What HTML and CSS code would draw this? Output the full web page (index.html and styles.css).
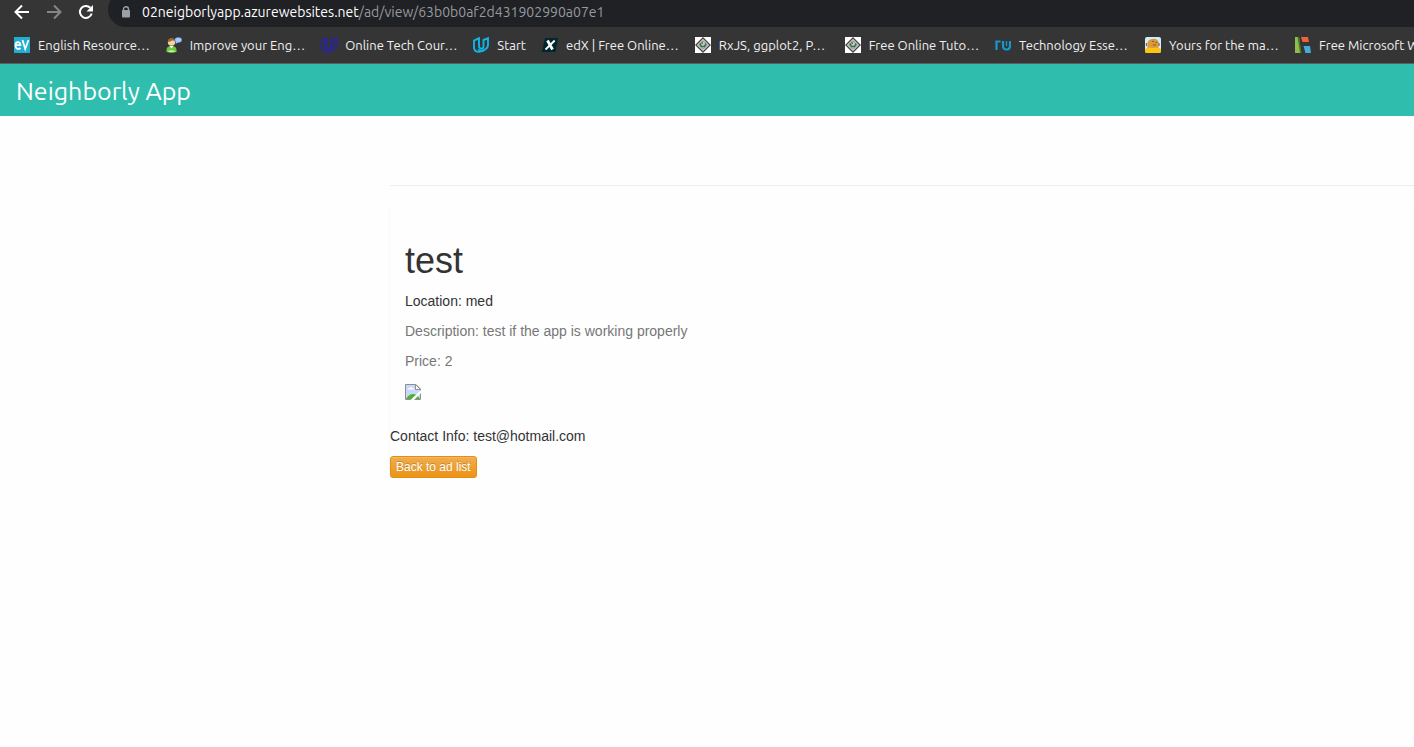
FILE: index.html
```html
<!DOCTYPE html>
<html lang="en">
<head>
<meta charset="utf-8">
<title>Neighborly App</title>
<link rel="stylesheet" href="styles.css">
</head>
<body>
<header class="browser">
  <div class="toolbar">
    <button class="nav-button" type="button" aria-label="Back"><svg width="16" height="16" viewBox="0 0 16 16"><path d="M15 8H2M8 1.5L1.5 8L8 14.5" fill="none" stroke="#fff" stroke-width="2"/></svg></button>
    <button class="nav-button" type="button" aria-label="Forward" disabled><svg width="16" height="16" viewBox="0 0 16 16"><path d="M1 8H14M8 1.5L14.500 8L8 14.500" fill="none" stroke="#868686" stroke-width="2"/></svg></button>
    <button class="nav-button" type="button" aria-label="Reload"><svg width="16" height="16" viewBox="0 0 16 16"><path d="M13.700 9.500A6 6 0 1 1 12.300 3.800" fill="none" stroke="#fff" stroke-width="2"/><path d="M15 1V7.500H8.500Z" fill="#fff"/></svg></button>
    <div class="address">
      <svg class="lock" width="10" height="12" viewBox="0 0 10 12"><path d="M2.500 5V3.200a2.500 2.500 0 0 1 5 0V5" fill="none" stroke="#9aa0a6" stroke-width="1.400"/><rect x="1" y="4" width="8" height="7.500" rx="1" fill="#9aa0a6"/></svg>
      <span class="url"><span class="host">02neigborlyapp.azurewebsites.net</span>/ad/view/63b0b0af2d431902990a07e1</span>
    </div>
  </div>
  <nav class="bookmarks" aria-label="Bookmarks">
    <a class="bookmark" href="#"><svg class="favicon" viewBox="0 0 16 16"><rect width="16" height="16" fill="#22aed1"/><path d="M1.500 8.200H6.500C6.500 4 1.500 4 1.500 8.300C1.500 12.500 5 12.500 6.500 11M8.500 3L11.200 12L14.500 3" fill="none" stroke="#fff" stroke-width="1.800"/></svg><span class="label">English Resource…</span></a>
    <a class="bookmark" href="#"><svg class="favicon" viewBox="0 0 16 16"><path d="M.5 15C0 10 2.500 9 5.500 9S11 10 10.500 15Q5.500 16.500 .5 15Z" fill="#69c83f"/><path d="M1.500 14.500Q5.500 12 9.500 14.500Q5.500 16 1.500 14.500Z" fill="#c4f3a0"/><path d="M3.500 9L5.500 11.500L7.500 9Z" fill="#fff"/><circle cx="5.500" cy="5.200" r="3.600" fill="#f7d3a1"/><path d="M1.800 5C1.500 0 9 0 9.100 4.500L6.500 3.200Q4.500 5 1.800 5Z" fill="#9d642b"/><ellipse cx="12.300" cy="3" rx="3.400" ry="2.400" fill="#a9ccff" stroke="#5f98e8" stroke-width=".6"/><path d="M10 4.500L9.500 7L12 5.300Z" fill="#a9ccff"/></svg><span class="label">Improve your Eng…</span></a>
    <a class="bookmark" href="#"><svg class="favicon" viewBox="0 0 16 16"><path d="M5.500 .8L.7 3.500V10.500Q1 15.300 6 15.300Q11 14.500 12.500 13Q15.400 11.500 15.400 8V.8L10.500 3V9.500Q10.300 12 8.500 12Q6 11.500 5.800 9V.8M3.500 2V9.500Q4 13 7.200 14V15M12.800 2V8Q12.500 12 9 12" fill="none" stroke="#2015ff" stroke-width=".8"/></svg><span class="label">Online Tech Cour…</span></a>
    <a class="bookmark" href="#"><svg class="favicon" viewBox="0 0 16 16"><path d="M6 1.200L1 3.700V10.500Q1.200 14.800 6 14.800Q10.500 14 12 12.500Q15 11 15 7.500V1.200L10.500 3V9.500Q10.300 11.800 8.500 11.800Q6 11.500 6 9Z" fill="none" stroke="#10b4e5" stroke-width="1.900"/><path d="M5 12.500L8 14" stroke="#10b4e5" stroke-width="1.500"/></svg><span>Start</span></a>
    <a class="bookmark" href="#"><svg class="favicon" viewBox="0 0 16 16"><path d="M3 1H16L13.500 15H0Z" fill="#00262b"/><path d="M5.500 3.500L10.500 12.500" stroke="#fff" stroke-width="2.800"/><path d="M12.700 3.500L3.500 12.500" stroke="#fff" stroke-width="1.800"/></svg><span class="label">edX | Free Online…</span></a>
    <a class="bookmark" href="#"><svg class="favicon" viewBox="0 0 16 16"><rect width="16" height="16" fill="#fff"/><path d="M8 1L15 8L8 15L1 8Z" fill="#fff" stroke="#444" stroke-width="1.400"/><path d="M8 3.500L12.500 8L8 12.500L3.500 8Z" fill="#b8d0bf" stroke="#777"/><path d="M5 6.500L6.500 9.500H9.500L11 6.500M6.500 6H8" fill="none" stroke="#316f49" stroke-width="1.500"/><circle cx="7" cy="5.500" r=".8" fill="#d55"/></svg><span class="label">RxJS, ggplot2, P…</span></a>
    <a class="bookmark" href="#"><svg class="favicon" viewBox="0 0 16 16"><rect width="16" height="16" fill="#fff"/><path d="M8 1L15 8L8 15L1 8Z" fill="#fff" stroke="#444" stroke-width="1.400"/><path d="M8 3.500L12.500 8L8 12.500L3.500 8Z" fill="#b8d0bf" stroke="#777"/><path d="M5 6.500L6.500 9.500H9.500L11 6.500M6.500 6H8" fill="none" stroke="#316f49" stroke-width="1.500"/><circle cx="7" cy="5.500" r=".8" fill="#d55"/></svg><span class="label">Free Online Tuto…</span></a>
    <a class="bookmark" href="#"><svg class="favicon" viewBox="0 0 16 16"><path d="M1.500 13V4.500H5.500M8 4V8.500Q8 12.500 11.500 12.500Q15 12.500 15 8.500V4" fill="none" stroke="#1498cf" stroke-width="2.200"/><path d="M11.500 4V9" stroke="#1498cf" stroke-width="1.400"/></svg><span class="label">Technology Esse…</span></a>
    <a class="bookmark" href="#"><svg class="favicon" viewBox="0 0 16 16"><rect width="16" height="16" rx="2" fill="#cdeefb"/><path d="M2.500 11V6Q3 2.500 7 2Q12 1 13.500 5V11Z" fill="#d99a3c"/><path d="M1.500 6V9M14 6V9" stroke="#b94b32" stroke-width="1.200"/><path d="M7 4.500H9M10.500 5.500H12.500M8 8H11" stroke="#75451c" stroke-width=".8"/><path d="M0 12Q4 9.500 8 11Q13 9.500 16 12V14Q16 16 14 16H2Q0 16 0 14Z" fill="#fdc414"/></svg><span class="label">Yours for the ma…</span></a>
    <a class="bookmark" href="#"><svg class="favicon" viewBox="0 0 16 16"><path d="M0 0H4L6 16H0Z" fill="#8fbd4c"/><path d="M4 0L6.500 16H5L2.500 0Z" fill="#4b722a"/><path d="M6 0H13L14 5H7.500Z" fill="#f0623a"/><path d="M8.500 9H15L16 16H10.500Z" fill="#43acd9"/></svg><span>Free Microsoft W</span></a>
  </nav>
</header>
<div class="app-bar"><a class="brand" href="#">Neighborly App</a></div>
<main class="content">
  <hr class="divider">
  <article class="card">
    <div class="caption">
      <h1 class="title">test</h1>
      <p class="text">Location: med</p>
      <p class="text muted">Description: test if the app is working properly</p>
      <p class="text muted">Price: 2</p>
      <svg class="photo" role="img" aria-label="Missing picture" width="16" height="16" viewBox="0 0 16 16"><path d="M.5 .5H11L15.500 5V15.500H.5Z" fill="#c6d9f8" stroke="#909090"/><path d="M10.500 .5V5.500H15.500Z" fill="#fff" stroke="#909090"/><path d="M2.500 5.500Q3 3.500 4.500 4Q6 1.800 7.500 4Q9 4 9 5.500Z" fill="#fff"/><path d="M1 15Q4 10 8 10Q12 10 15 15Z" fill="#54ae35"/><path d="M16 6V9L9 16H5.500Z" fill="#fff"/></svg>
    </div>
    <p class="text">Contact Info: test@hotmail.com</p>
    <button class="back" type="button">Back to ad list</button>
  </article>
</main>
</body>
</html>
```
FILE: styles.css
```css
* { box-sizing: border-box; }
body {
  margin: 0;
  background: #fefefe;
  color: #333;
  font: 14px/20px "Liberation Sans", Arial, sans-serif;
  overflow-x: hidden;
}
.browser {
  background: #353535;
  color: #f1f1f1;
  border-bottom: 1px solid #5d5d5d;
  font-family: Ubuntu, "Noto Sans", sans-serif;
  overflow: hidden;
}
.toolbar { display: flex; height: 27px; padding-left: 14px; }
.nav-button {
  display: flex;
  align-items: center;
  width: 32px;
  height: 24px;
  padding: 0;
  border: 0;
  background: none;
}
.address {
  display: flex;
  flex: 1;
  align-items: center;
  gap: 11px;
  margin: -8px 0 0 -2px;
  padding: 5px 0 0 13px;
  background: #202124;
  border-radius: 18px 0 0 18px;
}
.url { color: #969a9e; font-size: 14px; white-space: nowrap; }
.host { color: #fff; }
.bookmarks { display: flex; gap: 16px; height: 36px; padding-left: 14px; }
.bookmark {
  display: flex;
  flex: none;
  align-items: center;
  gap: 8px;
  color: inherit;
  font-size: 13px;
  text-decoration: none;
  white-space: nowrap;
}
.favicon { flex: none; width: 16px; height: 16px; }
.label { min-width: 110px; }
.app-bar { padding: 9px 16px 7px; background: #2fbdad; }
.brand {
  display: block;
  color: #fff;
  font: 25px/36px Ubuntu, "Noto Sans", sans-serif;
  text-decoration: none;
}
.content { margin-left: 390px; padding-top: 69px; }
.divider { margin: 0 0 20px; border: 0; border-top: 1px solid #eee; }
.card {
  margin-right: -10px;
  border-radius: 4px;
  box-shadow: 0 1px 2px rgba(0, 0, 0, 0.1);
}
.caption { padding: 35px 15px 26px; }
.title { margin: 0 0 10px; font-size: 36px; font-weight: 400; line-height: 40px; }
.text { margin: 0 0 10px; }
.muted { color: #777; }
.photo { display: block; margin-top: 13px; }
.back {
  display: block;
  padding: 1px 5px;
  border: 1px solid #e38d13;
  border-radius: 3px;
  background: linear-gradient(#f0ad4e, #eb9316);
  box-shadow: inset 0 1px 0 rgba(255, 255, 255, 0.15), 0 1px 1px rgba(0, 0, 0, 0.08);
  color: #fff;
  font: 12px/18px "Liberation Sans", Arial, sans-serif;
  text-shadow: 0 -1px 0 rgba(0, 0, 0, 0.2);
}
```
